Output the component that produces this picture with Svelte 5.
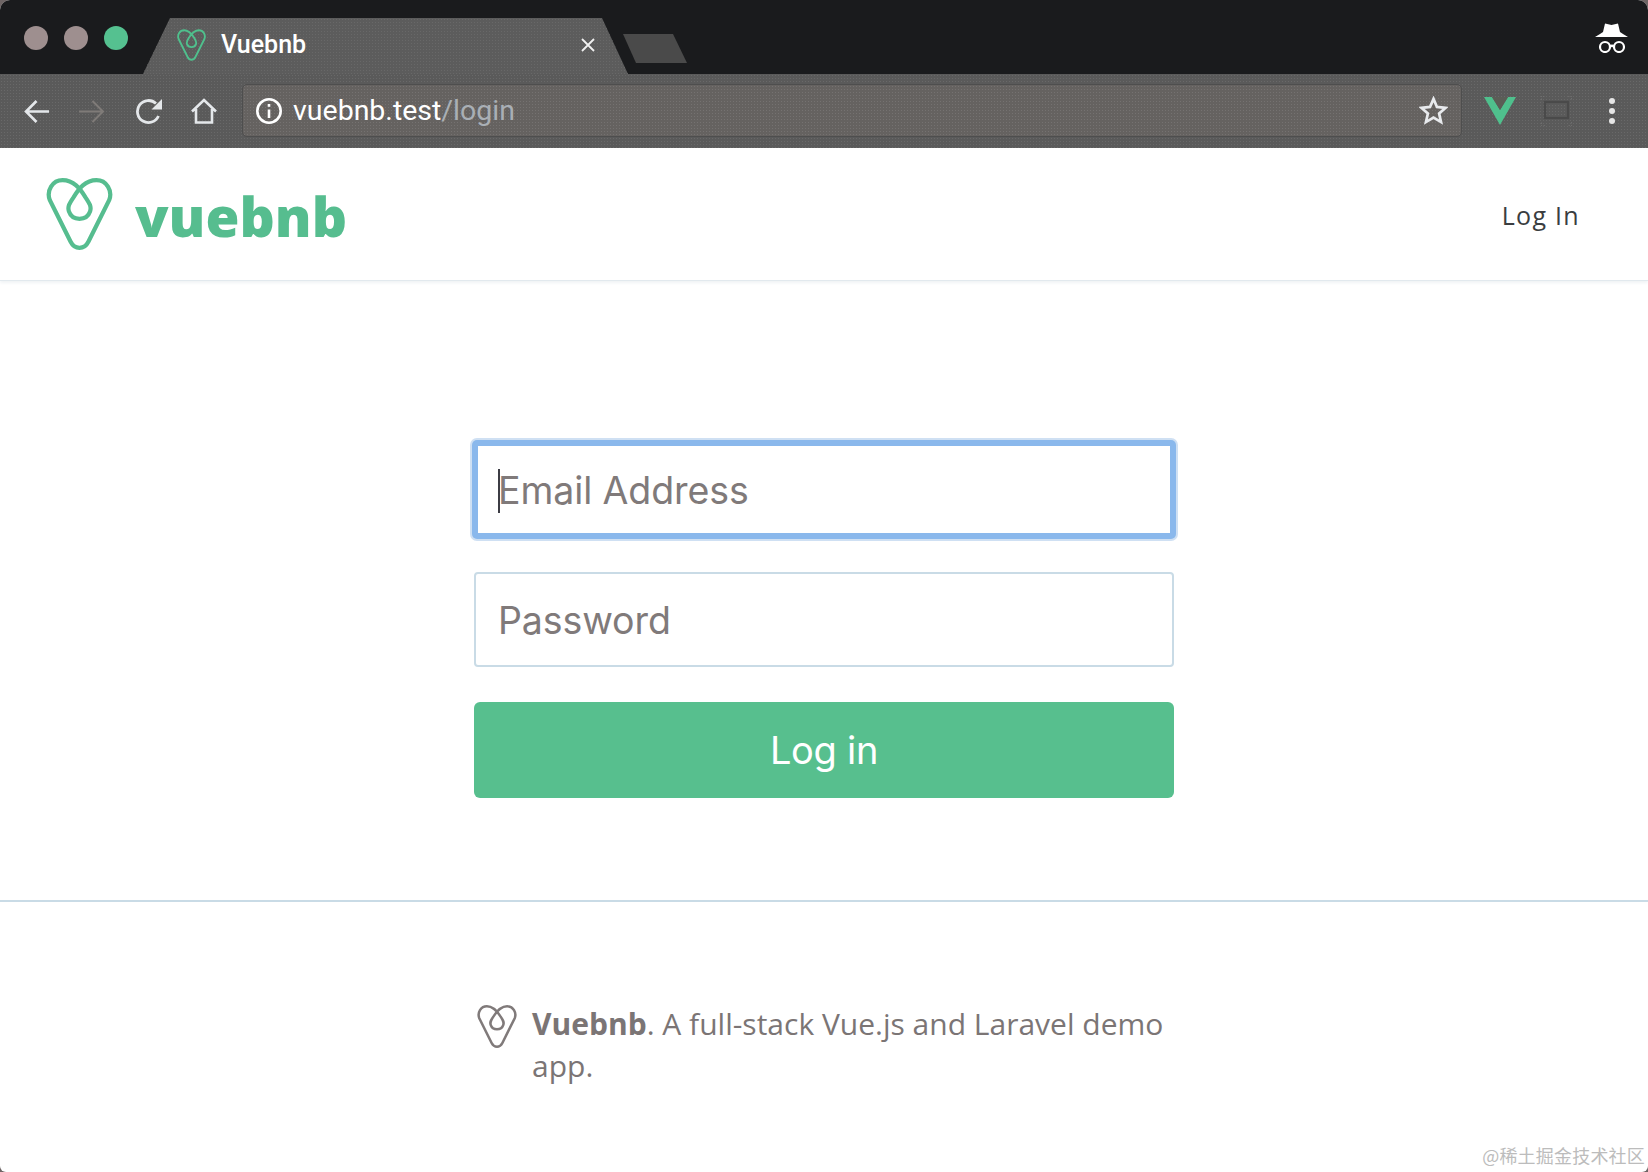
<script>
  const logoPath = "M23 60 L3.5 21 C0 12 6 2 15.5 2 C26 2 32 10 37 18 C41 24 43 27 41.5 31.5 C40 36 36 38.5 31.5 38.5 C27 38.5 23 36 21.5 31.5 C20 27 22 24 26 18 C31 10 37 2 47.5 2 C57 2 63 12 59.5 21 L40 60 C36 68 27 68 23 60 Z";
</script>

{#snippet logo(cls)}
  <svg class={cls} viewBox="0 0 63 68" fill="none" stroke="currentColor" stroke-width="4" aria-hidden="true"><path d={logoPath} /></svg>
{/snippet}

<div class="window">
  <header class="chrome">
    <div class="tabstrip">
      <div class="lights">
        <span class="light"></span>
        <span class="light"></span>
        <span class="light green"></span>
      </div>
      <div class="tab">
        {@render logo("tab-logo")}
        <span class="tab-title">Vuebnb</span>
        <svg class="tab-close" viewBox="0 0 14 14" stroke="#f0f0f0" stroke-width="1.8"><path d="M1 1 L13 13 M13 1 L1 13" /></svg>
      </div>
      <div class="newtab"></div>
      <svg class="incognito" viewBox="0 0 33 30" aria-hidden="true">
        <path fill="#fff" d="M10 0.5 L16.5 2 L23 0.5 L25 9 L28 11 L33 14 L0 14 L5 11 L8 9 Z" />
        <g fill="none" stroke="#fff" stroke-width="2.2">
          <circle cx="10" cy="24" r="5" />
          <circle cx="24" cy="24" r="5" />
          <path d="M15 23.5 Q17 22 19 23.5" />
        </g>
      </svg>
    </div>
    <div class="toolbar">
      <svg class="ic back" viewBox="0 0 26 25" fill="none" stroke="#e4e7ea" stroke-width="2.6"><path d="M26 12.5 H3 M13.5 2 L3 12.5 L13.5 23" /></svg>
      <svg class="ic fwd" viewBox="0 0 26 25" fill="none" stroke="#7f7b78" stroke-width="2"><path d="M0 12.5 H24 M13.5 2 L24 12.5 L13.5 23" /></svg>
      <svg class="ic reload" viewBox="0 0 27 26" fill="none"><path stroke="#e4e7ea" stroke-width="2.8" d="M23.5 18 A11 11 0 1 1 21 5.5" /><path fill="#e4e7ea" d="M27 1 V11.5 H16.5 Z" /></svg>
      <svg class="ic home" viewBox="0 0 26 26" fill="none" stroke="#e4e7ea" stroke-width="2.6"><path d="M1 13.5 L13 2 L25 13.5 M5 11 V24.5 H21 V11" /></svg>
      <div class="omnibox">
        <svg class="info" viewBox="0 0 28 28" fill="none" stroke="#fff" stroke-width="2.6"><circle cx="14" cy="14" r="11.7" /><path d="M14 12.5 V21" /><path d="M14 7 V9.8" /></svg>
        <span class="url">vuebnb.test<span class="path">/login</span></span>
        <svg class="star" viewBox="0 0 30 30" fill="none" stroke="#e8eaed" stroke-width="2.8" stroke-linejoin="miter"><path d="M15 3 L18.6 11.3 L27.6 12.2 L20.8 18.2 L22.8 27 L15 22.4 L7.2 27 L9.2 18.2 L2.4 12.2 L11.4 11.3 Z" /></svg>
      </div>
      <svg class="vue" viewBox="0 0 32 28"><path fill="#4fc08d" d="M0 0 H8 L16 13 L24 0 H32 L16 28 Z" /><path fill="#5b5d56" d="M8 0 H24 L16 13 Z" /></svg>
      <svg class="cast" viewBox="0 0 31 30" fill="none"><rect x="4" y="6" width="23" height="16" stroke="#4a4a4a" stroke-width="2.2" /><path stroke="#7d7d7d" stroke-width="1.2" stroke-dasharray="1.5 1.5" d="M0 4 V0 H4 M27 0 H31 V4 M31 26 V30 H27 M4 30 H0 V26" /></svg>
      <div class="menu"><span></span><span></span><span></span></div>
    </div>
  </header>

  <nav class="nav">
    <div class="brand">
      {@render logo("nav-logo")}
      <span class="brand-name">vuebnb</span>
    </div>
    <a class="login-link" href="#login">Log In</a>
  </nav>

  <main class="main">
    <form class="form" onsubmit={(e) => e.preventDefault()}>
      <div class="field focus">
        <span class="caret"></span>
        <input type="text" placeholder="Email Address" />
      </div>
      <div class="field">
        <input type="password" placeholder="Password" />
      </div>
      <button class="submit" type="submit">Log in</button>
    </form>
  </main>

  <footer class="footer">
    <div class="foot-inner">
      {@render logo("foot-logo")}
      <p><strong>Vuebnb</strong>. A full-stack Vue.js and Laravel demo app.</p>
    </div>
    <span class="mark">@稀土掘金技术社区</span>
  </footer>
</div>

<style>
  :global(body) { margin: 0; background: #6e6565; }
  * { box-sizing: border-box; }
  .window {
    position: relative; width: 1648px; height: 1172px; overflow: hidden;
    background: #fff; border-radius: 10px 10px 6px 6px;
    display: flex; flex-direction: column;
    font-family: "Open Sans", sans-serif;
  }
  .chrome { background: #1a1b1d; height: 148px; flex: none; }
  .tabstrip { height: 74px; display: flex; align-items: flex-end; position: relative; }
  .lights { display: flex; gap: 16px; padding: 0 0 24px 24px; align-self: flex-end; width: 143px; }
  .light { width: 24px; height: 24px; border-radius: 50%; background: #9e8f8f; flex: none; }
  .light.green { background: #55c190; }
  .tab {
    width: 485px; height: 56px; background: #5c5c5c;
    clip-path: polygon(27px 0, 459px 0, 485px 100%, 0 100%);
    display: flex; align-items: center; padding: 0 0 3px 34px; color: #4fc08d;
    background-image: radial-gradient(#686868 0.6px, transparent 0.8px);
    background-size: 3px 3px;
  }
  :global(.tab-logo) { width: 29px; height: 32px; flex: none; }
  .tab-title { color: #fff; font: 500 25px "Roboto", sans-serif; margin-left: 15px; flex: 1; }
  .tab-close { width: 14px; height: 14px; margin-right: 33px; }
  .newtab {
    width: 64px; height: 29px; background: #4a4a4a; margin: 0 0 11px -5px;
    clip-path: polygon(0 0, 50px 0, 64px 100%, 13px 100%);
  }
  .incognito { width: 33px; height: 30px; margin: 0 20px 21px auto; }

  .toolbar {
    height: 74px; background: #5a5a5a; display: flex; align-items: center;
    background-image: radial-gradient(#696969 0.6px, transparent 0.8px);
    background-size: 3px 3px;
  }
  .ic { flex: none; }
  .back { width: 26px; height: 25px; margin-left: 23px; }
  .fwd { width: 26px; height: 25px; margin-left: 30px; }
  .reload { width: 27px; height: 26px; margin-left: 30px; }
  .home { width: 26px; height: 26px; margin-left: 29px; }
  .omnibox {
    width: 1220px; height: 53px; margin: 0 0 1px 25px;
    background: #656260; border: 1px solid #4e4e4e; border-radius: 5px;
    display: flex; align-items: center; padding: 0 13px 0 12px;
    background-image: radial-gradient(#757271 0.7px, transparent 0.9px);
    background-size: 3px 3px;
  }
  .info { width: 28px; height: 28px; flex: none; }
  .url { font: 400 28.5px "Roboto", sans-serif; color: #fff; margin-left: 10px; flex: 1; }
  .path { color: #a9afb5; }
  .star { width: 29px; height: 29px; }
  .vue { width: 32px; height: 28px; margin-left: 22px; flex: none; }
  .cast { width: 31px; height: 30px; margin-left: 25px; flex: none; }
  .menu { display: flex; flex-direction: column; gap: 4px; margin-left: 37px; }
  .menu span { width: 6px; height: 6px; border-radius: 50%; background: #e6e6e6; }

  .nav {
    height: 132px; flex: none; display: flex; align-items: center; justify-content: space-between;
    padding: 0 68px 0 46px; box-shadow: 0 1px 0 #e2e9ee, 0 3px 3px #f0f3f5;
    position: relative;
  }
  .brand { display: flex; align-items: center; color: #56bd8f; }
  :global(.nav-logo) { width: 67px; height: 72px; flex: none; }
  .brand-name { font: 800 55px "Open Sans", sans-serif; margin: 2px 0 0 22px; line-height: 1; }
  .login-link { color: #3a3d40; font-size: 25px; text-decoration: none; letter-spacing: 1.3px; margin-top: 2px; }

  .main { padding: 162px 0 102px; flex: none; }
  .form { width: 700px; margin: 0 auto; display: flex; flex-direction: column; gap: 35px; }
  .field { position: relative; height: 95px; }
  .field input {
    width: 100%; height: 100%; border: 2px solid #c9dbe6; border-radius: 4px;
    padding: 2px 22px 0; font: 400 37.5px "Inter", sans-serif; color: #333; background: #fff; outline: none;
    letter-spacing: -0.1px;
  }
  .field input::placeholder { color: #807a7a; opacity: 1; }
  .field.focus input {
    border: 4px solid #8ab8ec; border-radius: 3px; padding: 2px 20px 0;
    box-shadow: 0 0 0 2px #8ab8ec, 0 0 0 4px #cfe0f3;
  }
  .caret {
    position: absolute; left: 24px; top: 27px; width: 2px; height: 44px; background: #3c3c44; z-index: 1;
  }
  .submit {
    height: 96px; background: #57bf8e; border: none; border-radius: 6px; color: #fff;
    font: 400 38px "Inter", sans-serif; letter-spacing: -0.3px;
  }

  .footer { flex: 1; border-top: 2px solid #c9dbe6; position: relative; color: #7b7575; }
  .foot-inner { width: 700px; margin: 101px auto 0; display: flex; gap: 15px; padding-left: 3px; }
  :global(.foot-logo) { width: 40px; height: 43px; flex: none; color: #807a7a; margin-top: 2px; }
  .foot-inner p { margin: 0; font-size: 30px; line-height: 42px; width: 642px; }
  .foot-inner strong { font-weight: 700; }
  .mark {
    position: absolute; right: 3px; bottom: 4px;
    font: 400 18px "Noto Sans CJK SC", sans-serif; color: #bcbcbc; letter-spacing: 0.2px;
  }
</style>
